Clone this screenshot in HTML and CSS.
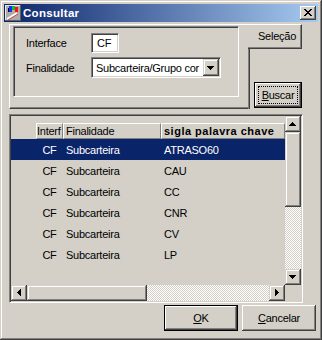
FILE: index.html
```html
<!DOCTYPE html>
<html lang="pt">
<head>
<meta charset="utf-8">
<title>Consultar</title>
<link rel="stylesheet" href="styles.css">
</head>
<body>
<div class="win">
  <div class="titlebar">
    <svg class="appicon" viewBox="0 0 16 16" shape-rendering="crispEdges">
      <rect width="16" height="16" fill="#b0aca4"/>
      <path d="M0 0h16v1H0z M0 0h1v16H0z" fill="#e8e8e8"/>
      <path d="M15 0h1v16h-1z M0 15h16v1H0z" fill="#606060"/>
      <rect x="4" y="1" width="3" height="6" fill="#1030ff"/>
      <rect x="7" y="1" width="3" height="4" fill="#10c020"/>
      <rect x="10" y="2" width="3" height="5" fill="#ff1010"/>
      <path d="M3 3h1v4h-1z" fill="#000"/>
      <path d="M2 14 L12 8" stroke="#ffffff" stroke-width="2" shape-rendering="auto"/>
      <path d="M3 15 L13 9" stroke="#e04060" stroke-width="1" shape-rendering="auto"/>
    </svg>
    <span class="title">Consultar</span>
    <span class="close">
      <svg viewBox="0 0 16 14" width="16" height="14" shape-rendering="crispEdges"><path d="M4 3h2v1h-2z M10 3h2v1h-2z M5 4h2v1h-2z M9 4h2v1h-2z M6 5h4v1h-4z M7 6h2v1h-2z M6 7h4v1h-4z M5 8h2v1h-2z M9 8h2v1h-2z M4 9h2v1h-2z M10 9h2v1h-2z" fill="#000"/></svg>
    </span>
  </div>
  <div class="client">
    <div class="page">
      <div class="page-main">
        <div class="groupbox">
          <span class="lbl">Interface</span>
          <div class="edit">CF</div>
          <span class="lbl">Finalidade</span>
          <div class="combo">
            <span class="combo-text">Subcarteira/Grupo cor</span>
            <span class="ddbtn"><svg viewBox="0 0 16 17" width="16" height="17" shape-rendering="crispEdges"><path d="M4 7h7v1h-7z M5 8h5v1h-5z M6 9h3v1h-3z M7 10h1v1h-1z" fill="#000"/></svg></span>
          </div>
        </div>
      </div>
      <div class="page-side">
        <div class="tab">Seleção</div>
        <div class="notch">
          <div class="btn def buscar"><span class="focus"><u>B</u>uscar</span></div>
        </div>
      </div>
    </div>

    <div class="gridpanel">
      <div class="gridbody">
        <div class="ghead">
          <span class="h0"></span>
          <span class="hc h1">Interf</span>
          <span class="hc h2">Finalidade</span>
          <span class="hc h3">sigla palavra chave</span>
        </div>
        <div class="grow sel"><span class="c0"></span><span class="c1">CF</span><span class="c2">Subcarteira</span><span class="c3">ATRASO60</span></div>
        <div class="grow"><span class="c0"></span><span class="c1">CF</span><span class="c2">Subcarteira</span><span class="c3">CAU</span></div>
        <div class="grow"><span class="c0"></span><span class="c1">CF</span><span class="c2">Subcarteira</span><span class="c3">CC</span></div>
        <div class="grow"><span class="c0"></span><span class="c1">CF</span><span class="c2">Subcarteira</span><span class="c3">CNR</span></div>
        <div class="grow"><span class="c0"></span><span class="c1">CF</span><span class="c2">Subcarteira</span><span class="c3">CV</span></div>
        <div class="grow"><span class="c0"></span><span class="c1">CF</span><span class="c2">Subcarteira</span><span class="c3">LP</span></div>
      </div>
      <div class="vscroll">
        <span class="sbtn"><svg viewBox="0 0 16 16" width="16" height="16" shape-rendering="crispEdges"><path d="M7 6h1v1h-1z M6 7h3v1h-3z M5 8h5v1h-5z M4 9h7v1h-7z" fill="#000"/></svg></span>
        <span class="thumb vthumb"></span>
        <span class="track"></span>
        <span class="sbtn"><svg viewBox="0 0 16 16" width="16" height="16" shape-rendering="crispEdges"><path d="M4 6h7v1h-7z M5 7h5v1h-5z M6 8h3v1h-3z M7 9h1v1h-1z" fill="#000"/></svg></span>
      </div>
      <div class="hscroll">
        <span class="sbtn"><svg viewBox="0 0 16 16" width="16" height="16" shape-rendering="crispEdges"><path d="M6 7h1v1h-1z M7 6h1v3h-1z M8 5h1v5h-1z M9 4h1v7h-1z" fill="#000"/></svg></span>
        <span class="thumb hthumb"></span>
        <span class="track"></span>
        <span class="sbtn"><svg viewBox="0 0 16 16" width="16" height="16" shape-rendering="crispEdges"><path d="M6 4h1v7h-1z M7 5h1v5h-1z M8 6h1v3h-1z M9 7h1v1h-1z" fill="#000"/></svg></span>
      </div>
      <div class="corner"></div>
    </div>

    <div class="buttons">
      <div class="btn def big"><span><u>O</u>K</span></div>
      <div class="btn big"><span><u>C</u>ancelar</span></div>
    </div>
  </div>
</div>
</body>
</html>
```

FILE: styles.css
```css
* { box-sizing: border-box; }
html, body { margin: 0; padding: 0; background: #d4d0c8; }

.win {
  width: 322px; height: 340px; padding: 4px;
  background: #d4d0c8;
  box-shadow: inset -1px -1px #404040, inset 1px 1px #d4d0c8, inset -2px -2px #808080, inset 2px 2px #ffffff;
  display: flex; flex-direction: column;
  font-family: "Liberation Sans", Arial, sans-serif;
  font-size: 11px; letter-spacing: -0.25px; color: #000;
  overflow: hidden;
}

/* title bar */
.titlebar {
  height: 18px; flex: none; margin-bottom: 1px;
  display: flex; align-items: center;
  background: linear-gradient(90deg, #0a246a, #a6caf0);
}
.appicon { width: 16px; height: 16px; margin-left: 1px; flex: none; display: block; }
.title {
  flex: 1; margin-left: 2px; color: #fff;
  font-weight: bold; font-size: 11.5px; letter-spacing: 0.3px;
}
.close {
  width: 16px; height: 14px; margin-right: 2px; flex: none; display: block;
  background: #d4d0c8;
  box-shadow: inset -1px -1px #404040, inset 1px 1px #fff, inset -2px -2px #808080, inset 2px 2px #d4d0c8;
}
.close svg { display: block; }

/* client */
.client { flex: 1; display: flex; flex-direction: column; }

/* L-shaped tab page */
.page { display: flex; margin: 1px 0 0 5px; width: 293px; height: 85px; flex: none; }
.page-main {
  width: 239px; height: 85px;
  border-top: 1px solid #fff; border-left: 1px solid #fff; border-bottom: 1px solid #404040;
  box-shadow: inset 0 -1px #808080;
  padding: 1px 0 0 3px;
}
.groupbox {
  width: 226px; height: 71px;
  border: 1px solid; border-color: #808080 #fff #fff #808080;
  box-shadow: inset 1px 1px #404040;
  padding: 6px 0 0 12px;
  display: grid; grid-template-columns: 65px 130px; row-gap: 4px;
  align-content: start; align-items: center;
}
.lbl { white-space: nowrap; }
.edit {
  width: 28px; height: 20px; background: #fff;
  border: 1px solid; border-color: #808080 #fff #fff #808080;
  box-shadow: inset 1px 1px #404040, inset -1px -1px #d4d0c8;
  padding-left: 5px; line-height: 18px;
}
.combo {
  width: 130px; height: 21px; background: #fff;
  border: 1px solid; border-color: #808080 #fff #fff #808080;
  box-shadow: inset 1px 1px #404040, inset -1px -1px #d4d0c8;
  padding: 1px 1px 1px 4px;
  display: flex; align-items: center;
}
.combo-text { flex: 1; white-space: nowrap; overflow: hidden; }
.ddbtn {
  width: 16px; height: 17px; flex: none; display: block; background: #d4d0c8;
  box-shadow: inset -1px -1px #404040, inset 1px 1px #d4d0c8, inset -2px -2px #808080, inset 2px 2px #fff;
}
.ddbtn svg { display: block; }

.page-side { width: 54px; display: flex; flex-direction: column; }
.tab {
  height: 25px; flex: none;
  border-top: 1px solid #fff; border-right: 1px solid #404040; border-bottom: 1px solid #404040;
  box-shadow: inset -1px -1px #808080;
  padding-left: 10px; line-height: 22px; white-space: nowrap;
}
.notch {
  flex: 1;
  border-left: 1px solid #808080;
  box-shadow: inset 1px 0 #404040;
  padding: 33px 0 0 5px;
}

/* buttons */
.btn {
  background: #d4d0c8;
  box-shadow: inset -1px -1px #404040, inset 1px 1px #fff, inset -2px -2px #808080, inset 2px 2px #d4d0c8;
  display: flex; align-items: center; justify-content: center;
  white-space: nowrap;
}
.btn.def { border: 1px solid #000; }
.buscar { width: 48px; height: 26px; }
.buscar .focus {
  flex: 1; align-self: stretch; margin: 3px;
  border: 1px dotted #000;
  display: flex; align-items: center; justify-content: center;
}
.big { width: 74px; height: 26px; }

/* grid panel */
.gridpanel {
  margin: 5px 0 0 5px; width: 294px; height: 189px; flex: none;
  border: 1px solid; border-color: #808080 #fff #fff #808080;
  box-shadow: inset 1px 1px #404040, inset -1px -1px #d4d0c8;
  padding: 1px;
  display: grid; grid-template-columns: 274px 16px; grid-template-rows: 169px 16px;
}
.gridbody { padding-top: 7px; overflow: hidden; }
.ghead { display: flex; height: 16px; }
.h0 { width: 25px; flex: none; }
.hc {
  flex: none; height: 16px; overflow: hidden; white-space: nowrap;
  border-top: 1px solid #fff; border-left: 1px solid #fff;
  border-right: 1px solid #808080; border-bottom: 1px solid #808080;
  line-height: 14px;
}
.h1 { width: 27px; padding-left: 0; }
.h2 { width: 98px; padding-left: 2px; }
.h3 { width: 124px; padding-left: 2px; font-weight: bold; letter-spacing: 0.5px; }

.grow { display: flex; height: 21px; align-items: center; white-space: nowrap; }
.grow.sel { background: #0a246a; color: #fff; }
.c0 { width: 25px; flex: none; }
.c1 { width: 27px; flex: none; text-align: center; }
.c2 { width: 98px; flex: none; padding-left: 3px; }
.c3 { width: 124px; flex: none; padding-left: 3px; }

.vscroll { display: flex; flex-direction: column; }
.hscroll { display: flex; }
.sbtn {
  width: 16px; height: 16px; flex: none; display: block; background: #d4d0c8;
  box-shadow: inset -1px -1px #404040, inset 1px 1px #d4d0c8, inset -2px -2px #808080, inset 2px 2px #fff;
}
.sbtn svg { display: block; }
.thumb {
  flex: none; display: block; background: #d4d0c8;
  box-shadow: inset -1px -1px #404040, inset 1px 1px #d4d0c8, inset -2px -2px #808080, inset 2px 2px #fff;
}
.vthumb { height: 75px; }
.hthumb { width: 120px; }
.track {
  flex: 1; display: block;
  background-image: conic-gradient(#ffffff 25%, #d4d0c8 0 50%, #ffffff 0 75%, #d4d0c8 0);
  background-size: 2px 2px;
}
.corner { background: #d4d0c8; }

.buttons {
  display: flex; justify-content: flex-end; gap: 4px;
  margin-top: 2px; padding-right: 2px;
}
```
